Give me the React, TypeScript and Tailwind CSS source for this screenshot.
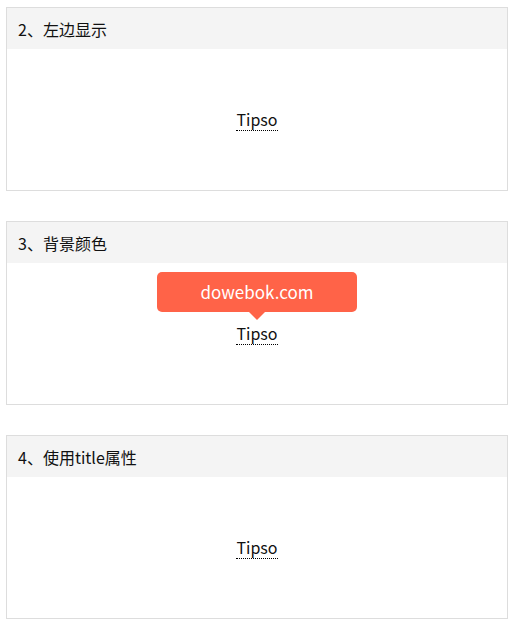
const font = '"Microsoft YaHei", "Noto Sans CJK SC", "Noto Sans", sans-serif';

const sections: { title: string; tip: boolean }[] = [
  { title: "2、左边显示", tip: false },
  { title: "3、背景颜色", tip: true },
  { title: "4、使用title属性", tip: false },
];

const Panel = ({ title, tip }: { title: string; tip: boolean }) => {
  return (
    <div className="w-[502px] border border-[#dddddd] bg-white">
      <div className="h-[41px] bg-[#f4f4f4] flex items-center pl-[11px] text-[16px] text-[#111]">
        {title}
      </div>
      <div className="h-[141px] flex items-center justify-center">
        <span className="relative text-[16px] leading-[22px] text-[#111] border-b border-dotted border-black">
          Tipso
          {tip && (
            <span className="absolute left-1/2 -translate-x-1/2 bottom-[32px] w-[200px] h-[40px] rounded-[5px] bg-[#ff6348] text-white text-[17px] flex items-center justify-center">
              dowebok.com
              <span className="absolute left-1/2 -translate-x-1/2 top-full w-0 h-0 border-l-[8px] border-r-[8px] border-t-[8px] border-l-transparent border-r-transparent border-t-[#ff6348]" />
            </span>
          )}
        </span>
      </div>
    </div>
  );
};

export default function App() {
  return (
    <div className="w-[515px] h-[627px] bg-white pt-[7px] pl-[6px] flex flex-col gap-[30px]" style={{ fontFamily: font }}>
      {sections.map((s, i) => (
        <Panel key={`panel-${i}`} title={s.title} tip={s.tip} />
      ))}
    </div>
  );
}
